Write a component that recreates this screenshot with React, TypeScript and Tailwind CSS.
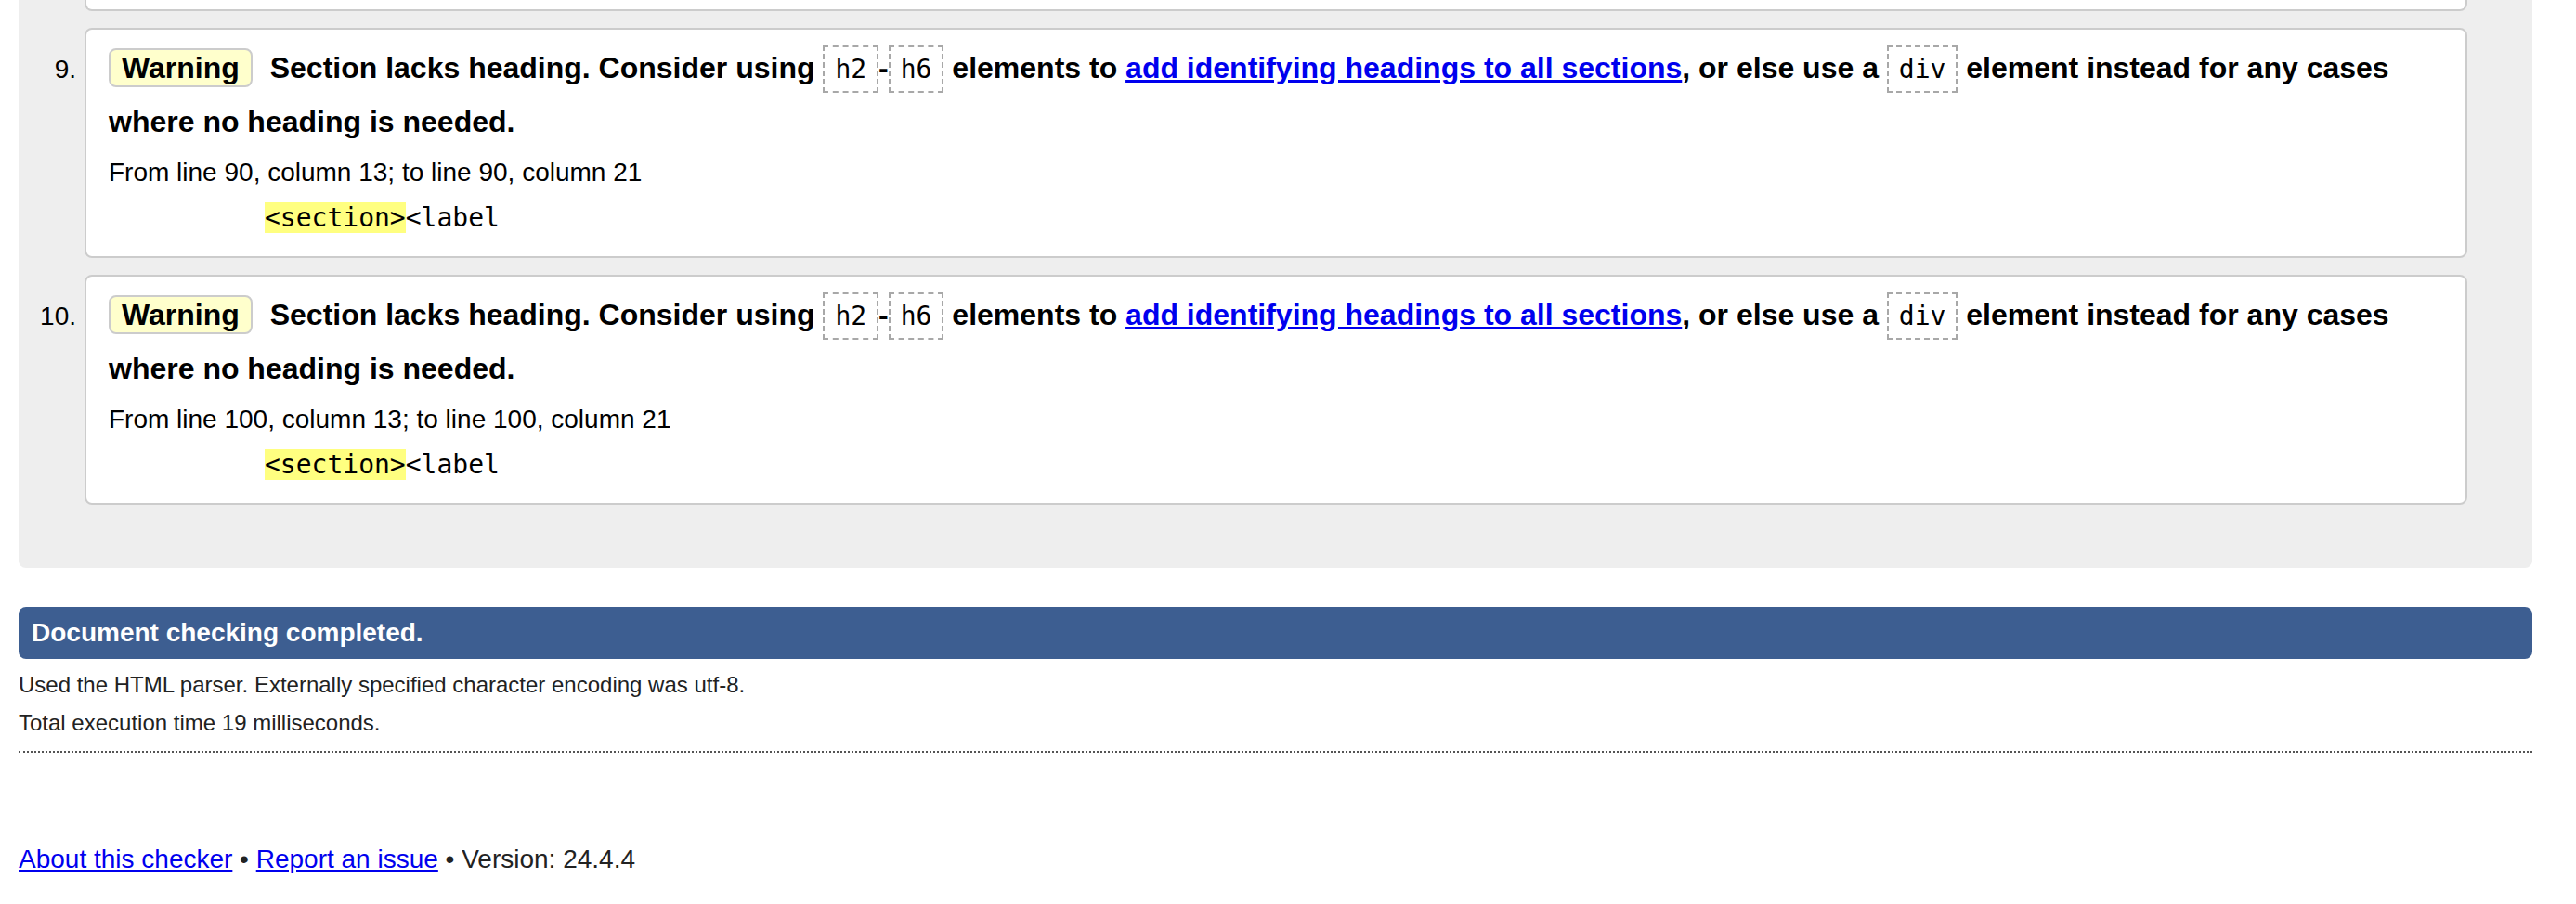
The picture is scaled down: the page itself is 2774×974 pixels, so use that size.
import React from 'react';

const sans = "font-['Liberation_Sans',Arial,Helvetica,sans-serif]";
const mono = "font-['DejaVu_Sans_Mono',Menlo,monospace]";

function Code({ children }: { children: React.ReactNode }) {
  return (
    <code className={`${mono} border-2 border-dashed border-[#a8a8a8] px-[11px] py-[7px] text-[28px] leading-[30px] font-normal`}>
      {children}
    </code>
  );
}

function Message({ num, line }: { num: number; line: number }) {
  return (
    <div className="flex items-baseline">
      <div className="w-[71px] shrink-0 pr-[9px] text-right text-[28px] text-black">{num}.</div>
      <div className="flex-1 rounded-[8px] border-2 border-[#cccccc] bg-white px-[24px] pt-[12px] pb-[20px]">
        <p className="text-[32px] leading-[58px] font-bold text-black">
          <span className="mr-[10px] inline-block rounded-[8px] border-2 border-[#cccccc] bg-[#ffffcc] px-[12px] py-[1px] leading-[36px]">
            Warning
          </span>{' '}
          Section lacks heading. Consider using <Code>h2</Code>-<Code>h6</Code> elements to{' '}
          <a href="#" className="text-[#0000ee] underline">
            add identifying headings to all sections
          </a>
          , or else use a <Code>div</Code> element instead for any cases where no heading is needed.
        </p>
        <p className="mt-[5px] text-[28px] leading-[42px] text-black">
          From line {line}, column 13; to line {line}, column 21
        </p>
        <p className={`${mono} mt-[7px] pl-[168px] text-[28px] leading-[42px] text-black`}>
          <span className="bg-[#ffff80]">&lt;section&gt;</span>&lt;label
        </p>
      </div>
    </div>
  );
}

export default function App() {
  return (
    <div className={`${sans} min-h-screen bg-white pl-[20px] pr-[47px]`}>
      <div className="rounded-b-[8px] bg-[#eeeeee] pr-[70px] pb-[68px]">
        <div className="ml-[71px] h-[12px] rounded-b-[8px] border-x-2 border-b-2 border-[#cccccc] bg-white" />
        <div className="mt-[18px] flex flex-col gap-[18px]">
          <Message num={9} line={90} />
          <Message num={10} line={100} />
        </div>
      </div>

      <div className="mt-[42px] flex h-[56px] items-center rounded-[8px] bg-[#3d5e91] px-[14px]">
        <h2 className="text-[28px] font-bold text-white">Document checking completed.</h2>
      </div>
      <div className="mt-[7px] text-[24px] leading-[41px] text-[#222]">
        <p>Used the HTML parser. Externally specified character encoding was utf-8.</p>
        <p>Total execution time 19 milliseconds.</p>
      </div>
      <hr className="mt-[10px] border-0 border-t-2 border-dotted border-[#555]" />

      <p className="mt-[94px] text-[28px] leading-[42px] text-[#222]">
        <a href="#" className="text-[#0000ee] underline">About this checker</a> •{' '}
        <a href="#" className="text-[#0000ee] underline">Report an issue</a> • Version: 24.4.4
      </p>
    </div>
  );
}
